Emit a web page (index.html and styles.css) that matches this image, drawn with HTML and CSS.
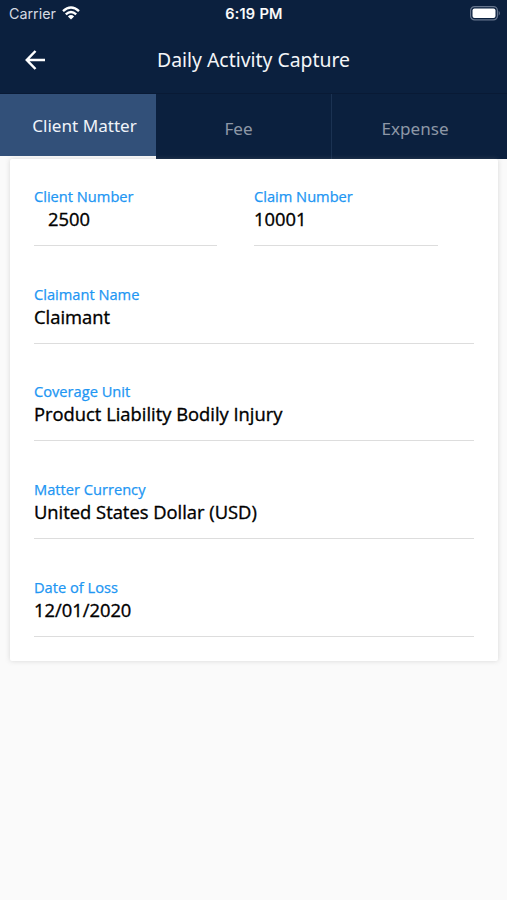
FILE: index.html
```
<!DOCTYPE html>
<html lang="en">
<head>
<meta charset="utf-8">
<title>Daily Activity Capture</title>
<link rel="stylesheet" href="styles.css">
</head>
<body>
<header class="status">
  <div class="carrier"><span>Carrier</span>
    <svg class="wifi" viewBox="0 0 18 14" width="18" height="14" fill="none" stroke="#fff" stroke-width="2.4"><path d="M1 5.2Q9-2 17 5.2M3.8 8.3Q9 3.6 14.2 8.3"/><path d="M9 13.5L5.9 10.4Q9 7.8 12.1 10.4Z" fill="#fff" stroke="none"/></svg>
  </div>
  <span class="time">6:19 PM</span>
  <svg class="battery" viewBox="0 0 31 15" width="31" height="15"><rect x=".6" y=".6" width="26.8" height="13.3" rx="4" fill="none" stroke="#66758d" stroke-width="1.2"/><rect x="2.5" y="2.5" width="23" height="9.5" rx="2" fill="#fff"/><path d="M28.7 4.8Q31 7.2 28.7 9.7Z" fill="#66758d"/></svg>
</header>
<div class="titlebar">
  <svg class="back" viewBox="0 0 20 20" width="20" height="20" fill="none" stroke="#fff" stroke-width="2.5"><path d="M20 10H2M10.5 1L1.8 10L10.5 19"/></svg>
  <h1>Daily Activity Capture</h1>
</div>
<nav class="tabs">
  <div class="tab active"><span>Client Matter</span></div>
  <div class="tab"><span>Fee</span></div>
  <div class="tab last"><span>Expense</span></div>
</nav>
<main class="card">
  <div class="pair">
    <div class="field"><label>Client Number</label><p class="indent">2500</p></div>
    <div class="field"><label>Claim Number</label><p>10001</p></div>
  </div>
  <div class="field"><label>Claimant Name</label><p>Claimant</p></div>
  <div class="field"><label>Coverage Unit</label><p>Product Liability Bodily Injury</p></div>
  <div class="field"><label>Matter Currency</label><p>United States Dollar (USD)</p></div>
  <div class="field"><label>Date of Loss</label><p>12/01/2020</p></div>
</main>
</body>
</html>
```
FILE: styles.css
```
* { box-sizing: border-box; }
body { margin: 0; height: 900px; overflow: hidden; background: #fafafa; font-family: "Noto Sans", sans-serif; }
.status { display: grid; grid-template-columns: 1fr auto 1fr; align-items: center; height: 28px; padding: 0 6px 1px 9px; background: #0b203e; color: #fff; font-family: Inter, sans-serif; font-size: 14.3px; }
.carrier { display: flex; align-items: center; gap: 6px; color: #d5dae2; }
.wifi { margin-top: -1px; }
.time { font-weight: 500; font-size: 14.7px; letter-spacing: .25px; margin-right: 2px; -webkit-text-stroke: .2px #fff; }
.battery { justify-self: end; }
.titlebar { display: grid; grid-template-columns: 132px 1fr; align-items: center; height: 66px; padding: 0 0 2px 25px; background: #0b203e; border-bottom: 1px solid #091a35; color: #f3f5f8; }
.titlebar h1 { margin: 0; font-size: 19.4px; font-weight: 400; white-space: nowrap; }
.tabs { display: grid; grid-template-columns: 156px 175px 176px; height: 65px; align-items: start; color: #8d97a6; font-size: 17.1px; }
.tab { height: 65px; display: flex; align-items: center; justify-content: center; padding: 4px 0 0; background: #0b203e; }
.tab:nth-child(2) { padding-right: 10px; }
.tab.active { height: 62px; padding: 0 0 0 13px; background: #325079; color: #f0f4f9; }
.tab.last { border-left: 1px solid #1b3252; padding-right: 9px; }
.card { position: relative; margin: 0 9px 0 10px; height: 502px; padding: 25px 24px 0; background: #fff; border-radius: 2px; box-shadow: 0 0 5px rgba(140,140,140,.3); display: flex; flex-direction: column; gap: 35.7px; }
.pair { display: grid; grid-template-columns: 183px 184px; gap: 37px; }
.field { height: 62px; border-bottom: 1px solid #ddd; padding-top: 2px; font-family: "Open Sans", sans-serif; }
.field label { display: block; font-size: 14.65px; line-height: 20px; color: #2196f3; -webkit-text-stroke: .25px #2196f3; white-space: nowrap; }
.field p { margin: 1px 0 0; font-size: 18.35px; line-height: 24px; color: #000; -webkit-text-stroke: .35px #000; white-space: nowrap; }
.field .indent { padding-left: 14px; }
```
